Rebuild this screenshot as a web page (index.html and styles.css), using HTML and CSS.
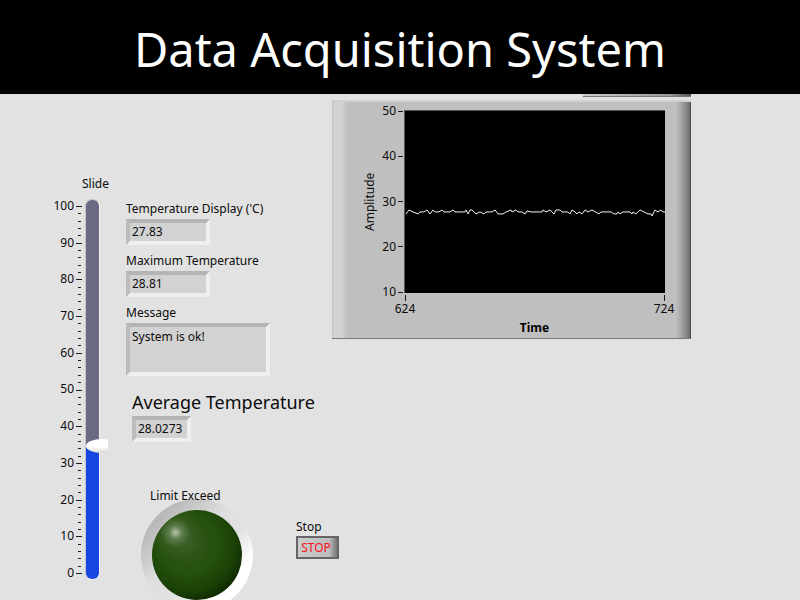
FILE: index.html
```html
<!DOCTYPE html>
<html lang="en">
<head>
<meta charset="utf-8">
<meta name="viewport" content="width=device-width, initial-scale=1">
<title>Data Acquisition System</title>
<link rel="stylesheet" href="styles.css">
</head>
<body>
<header class="banner"><h1>Data Acquisition System</h1></header>
<main class="panel">
  <section class="slide">
    <label class="slide-label" for="slide">Slide</label>
    <div class="slide-body">
      <ol class="scale">
        <li>100</li><li>90</li><li>80</li><li>70</li><li>60</li><li>50</li><li>40</li><li>30</li><li>20</li><li>10</li><li>0</li>
      </ol>
      <svg class="ticks" viewBox="0 0 6 381" aria-hidden="true">
        <path d="M0 7h6v1H0zM0 44h6v1H0zM0 80h6v1H0zM0 117h6v1H0zM0 154h6v1H0zM0 191h6v1H0zM0 227h6v1H0zM0 264h6v1H0zM0 301h6v1H0zM0 337h6v1H0zM0 374h6v1H0z"/>
        <path d="M2 14h3v1H2zM2 22h3v1H2zM2 29h3v1H2zM2 36h3v1H2zM2 51h3v1H2zM2 58h3v1H2zM2 66h3v1H2zM2 73h3v1H2zM2 88h3v1H2zM2 95h3v1H2zM2 102h3v1H2zM2 110h3v1H2zM2 124h3v1H2zM2 132h3v1H2zM2 139h3v1H2zM2 146h3v1H2zM2 161h3v1H2zM2 168h3v1H2zM2 176h3v1H2zM2 183h3v1H2zM2 198h3v1H2zM2 205h3v1H2zM2 213h3v1H2zM2 220h3v1H2zM2 235h3v1H2zM2 242h3v1H2zM2 249h3v1H2zM2 257h3v1H2zM2 271h3v1H2zM2 279h3v1H2zM2 286h3v1H2zM2 293h3v1H2zM2 308h3v1H2zM2 315h3v1H2zM2 323h3v1H2zM2 330h3v1H2zM2 345h3v1H2zM2 352h3v1H2zM2 359h3v1H2zM2 367h3v1H2z"/>
      </svg>
      <input class="slider" id="slide" type="range" min="0" max="100" step="0.1" value="34.5">
    </div>
  </section>

  <div class="readings">
    <div class="field">
      <label for="temp">Temperature Display ('C)</label>
      <input class="readout" id="temp" type="text" value="27.83" readonly>
    </div>
    <div class="field">
      <label for="max">Maximum Temperature</label>
      <input class="readout" id="max" type="text" value="28.81" readonly>
    </div>
    <div class="field">
      <label for="message">Message</label>
      <textarea class="readout message" id="message" readonly>System is ok!</textarea>
    </div>
    <div class="field average">
      <label for="avg">Average Temperature</label>
      <input class="readout narrow" id="avg" type="text" value="28.0273" readonly>
    </div>
    <div class="controls">
      <div class="limit">
        <span id="limit-label">Limit Exceed</span>
        <div class="led-ring" role="img" aria-labelledby="limit-label"><div class="led"></div></div>
      </div>
      <div class="stop">
        <label for="stop">Stop</label>
        <button class="stop-button" id="stop" type="button">STOP</button>
      </div>
    </div>
  </div>

  <section class="chart-area">
    <div class="legend-edge"></div>
    <div class="chart">
      <div class="y-title">Amplitude</div>
      <ol class="y-axis"><li>50</li><li>40</li><li>30</li><li>20</li><li>10</li></ol>
      <svg class="plot" viewBox="0 0 260 183" preserveAspectRatio="none" role="img" aria-label="Amplitude over time">
        <path transform="translate(0 .5)" d="M1 103L4 99L8 101L13 103L15 101H19L22 99L25 103L28 99L30 101H34L37 99L39 101H45L48 99L50 101H60L61 99L63 103L65 99H67L71 103L75 101L79 103L81 101H87L90 99L93 103H98L101 101L106 99L107 101L111 99L113 101H117L120 103L122 100L126 101H137L138 99L141 101L145 99L147 101L149 103L151 99H155L157 101H163L165 103L167 99L170 101L172 103L174 101L177 103L180 99L183 101L187 99L194 103L196 101H206L209 103H212L213 101L215 103L218 101H225L227 103L228 101L231 103L235 99L239 101L243 103H246L247 105L250 99L253 101L256 99L258 101H260"/>
      </svg>
      <div class="x-axis"><span>624</span><span>724</span></div>
      <div class="x-title">Time</div>
    </div>
  </section>
</main>
</body>
</html>
```

FILE: styles.css
```css
* { box-sizing: border-box; }

body {
  margin: 0;
  height: 100vh;
  display: flex;
  flex-direction: column;
  overflow: hidden;
  background: #e2e2e2;
  color: #0c0c0c;
  font: 12px/16px "Noto Sans", "Open Sans", sans-serif;
}

ol { list-style: none; margin: 0; padding: 0; }

.banner {
  flex: none;
  height: 94px;
  padding-top: 4px;
  display: flex;
  align-items: center;
  justify-content: center;
  background: #000;
  color: #fff;
}

.banner h1 {
  margin: 0;
  font: 400 47px/64px "Noto Sans", "Open Sans", sans-serif;
}

.panel {
  flex: 1;
  min-height: 0;
  display: flex;
  align-items: flex-start;
  padding: 0 109px 0 48px;
}

/* Slide */
.slide { flex: none; width: 78px; padding-top: 82px; }
.slide-label { display: block; margin-left: 34px; }
.slide-body { display: flex; height: 381px; margin-top: 7px; }

.scale {
  width: 26px;
  display: flex;
  flex-direction: column;
  justify-content: space-between;
  text-align: right;
  line-height: 14px;
}

.ticks { width: 6px; height: 381px; margin: 0 3px 0 2px; fill: #1c1c1c; }

.slider {
  appearance: none;
  writing-mode: vertical-lr;
  direction: rtl;
  width: 15px;
  height: 381px;
  margin: 0;
  border: 1px solid #c4c4c8;
  border-right-color: #f2f2f2;
  border-bottom-color: #f2f2f2;
  border-radius: 7px;
  background: linear-gradient(#6b6a85 65%, #1746e2 65%);
}

.slider::-webkit-slider-thumb {
  appearance: none;
  width: 22px;
  height: 14px;
  margin-left: 9px;
  border-radius: 16px 3px 3px 16px / 7px 3px 3px 7px;
  background: linear-gradient(#fff 55%, #d8d8d4);
}

/* Readings */
.readings { flex: none; width: 206px; padding-top: 107px; }

.field { display: flex; flex-direction: column; align-items: flex-start; margin-bottom: 8px; }
.field label { white-space: nowrap; }

.readout {
  width: 84px;
  height: 26px;
  margin: 2px 0 0;
  padding: 0 2px 2px;
  border: 4px solid;
  border-color: #b4b4b4 #efefef #efefef #bcbcbc;
  background: #d2d2d2;
  color: #0c0c0c;
  font: inherit;
  resize: none;
  outline: none;
}

.message { width: 144px; height: 53px; padding-top: 2px; overflow: hidden; }

.average { margin: 14px 0 0 6px; }
.average label { font-size: 18px; line-height: 24px; }
.narrow { width: 59px; }

.controls { display: flex; align-items: flex-start; margin: 46px 0 0 15px; }

.limit { width: 155px; display: flex; flex-direction: column; flex: none; }
.limit span { position: relative; z-index: 1; margin-left: 9px; }

.led-ring {
  width: 112px;
  height: 112px;
  margin: -5px 0 0;
  padding: 11px;
  border-radius: 50%;
  background: linear-gradient(135deg, #b2b2b2 12%, #dedede 42%, #e2e2e2 58%, #fff 76%);
}

.led {
  width: 90px;
  height: 90px;
  border-radius: 50%;
  background:
    radial-gradient(circle at 26% 25%, #b4c4a8 0, #8ba07c88 7%, #45682f55 16%, #25500d00 30%),
    radial-gradient(circle at 40% 38%, #34591f 0, #25500d 38%, #1b4206 60%, #0b1c00 84%, #050b00 100%);
}

.stop { display: flex; flex-direction: column; align-items: flex-start; padding-top: 31px; }

.stop-button {
  width: 43px;
  height: 23px;
  margin-top: 1px;
  padding: 0 3px 0 0;
  border: 2px solid #666;
  background: linear-gradient(90deg, #ccc, #bdbdbd 80%, #777);
  color: #ff1020;
  font: inherit;
}

/* Chart */
.chart-area { flex: 1; min-width: 0; }

.legend-edge {
  width: 30%;
  height: 3px;
  margin: 0 0 3px auto;
  border-bottom: 1px solid #777;
  background: linear-gradient(90deg, #ccc, #999 80%, #555);
}

.chart {
  display: grid;
  grid-template-columns: 16px 26px 1fr;
  grid-template-rows: 183px 26px 16px;
  padding: 8px 26px 3px 30px;
  border-top: 2px solid #d0d0d0;
  border-bottom: 1px solid #777;
  background: linear-gradient(90deg, #c2c2c2 0, #d4d4d4 3px, #d2d2d2 10px, #bfbfbf 15px, #bfbfbf calc(100% - 15px), #999 calc(100% - 8px), #777 calc(100% - 2px), #444 100%);
}

.y-title {
  writing-mode: vertical-rl;
  transform: rotate(180deg);
  text-align: center;
}

.y-axis {
  display: flex;
  flex-direction: column;
  justify-content: space-between;
  margin: -6px 1px -6px -1px;
  line-height: 14px;
}

.y-axis li { display: flex; align-items: center; justify-content: flex-end; gap: 2px; }
.y-axis li::after { content: ""; width: 5px; height: 1px; background: #1c1c1c; }

.plot {
  width: 100%;
  height: 183px;
  background: #000;
  border-top: 1px solid #555;
  border-left: 1px solid #555;
  fill: none;
  stroke: #f4f4f4;
}

.x-axis {
  grid-column: 3;
  display: flex;
  justify-content: space-between;
  margin: 2px -10px 0;
}

.x-axis span { display: flex; flex-direction: column; align-items: center; width: 22px; line-height: 16px; }
.x-axis span::before { content: ""; flex: none; width: 1px; height: 6px; background: #1c1c1c; }

.x-title { grid-column: 3; padding-top: 1px; text-align: center; font-weight: 700; color: #000; }
```
